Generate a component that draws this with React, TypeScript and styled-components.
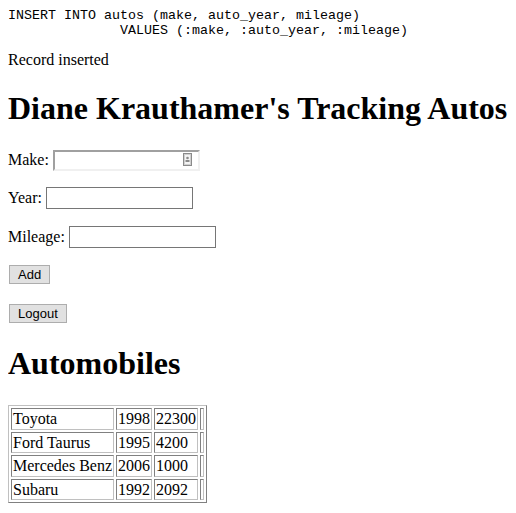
import React from "react";
import styled, { createGlobalStyle } from "styled-components";

const Global = createGlobalStyle`
  html, body { background: #fff; }
  body {
    margin: 8px;
    font-family: "Liberation Serif", "Times New Roman", serif;
    font-size: 16px;
    color: #000;
  }
`;

const Page = styled.div`
  display: flex;
  flex-direction: column;
`;

const Sql = styled.pre`
  margin: 0 0 13px;
  font-family: "Liberation Mono", "Courier New", monospace;
  font-size: 13.33px;
  line-height: 15px;
  white-space: pre;
`;

const Message = styled.div`
  margin: 0;
  line-height: 18px;
`;

const Heading = styled.h1`
  font-size: 32px;
  font-weight: bold;
  margin: 21px 0;
  line-height: 37px;
  white-space: nowrap;
`;

const Form = styled.form`
  display: flex;
  flex-direction: column;
  gap: 16.3px;
  margin-top: 1px;
`;

const Row = styled.div`
  display: flex;
  align-items: center;
  line-height: 18px;
  height: 22px;
`;

const Label = styled.label`
  margin-right: 4px;
`;

const TextInput = styled.input<{ $auto?: boolean }>`
  box-sizing: border-box;
  width: 147px;
  height: ${(p) => (p.$auto ? "21px" : "22px")};
  padding: 1px 2px;
  font-family: "Liberation Sans", Arial, sans-serif;
  font-size: 13.33px;
  background: #fff;
  border: ${(p) => (p.$auto ? "2px solid" : "1px solid")};
  border-color: ${(p) =>
    p.$auto ? "#a0a0a0 #f0f0f0 #f0f0f0 #a0a0a0" : "#767676"};
  outline: none;
`;

const FieldWrap = styled.span`
  position: relative;
  display: inline-flex;
`;

const CardIcon = styled.svg`
  position: absolute;
  right: 8px;
  top: 3px;
`;

const Button = styled.button`
  box-sizing: border-box;
  height: 19px;
  padding: 0 8px;
  margin-left: 1px;
  font-family: "Liberation Sans", Arial, sans-serif;
  font-size: 13px;
  color: #000;
  background: #e1e1e1;
  border: 1px solid #adadad;
  border-radius: 0;
  line-height: 15px;
`;

const ButtonRow = styled.div`
  display: flex;
  align-items: center;
  height: 22px;
`;

const Table = styled.table`
  border-collapse: separate;
  border-spacing: 2px;
  border: 1px solid;
  border-color: #c0c0c0 #808080 #808080 #c0c0c0;
  align-self: flex-start;
  margin-top: 2px;
`;

const Cell = styled.td`
  border: 1px solid;
  border-color: #808080 #c0c0c0 #c0c0c0 #808080;
  padding: 1px;
  line-height: 17.5px;
`;

const rows = [
  ["Toyota", "1998", "22300"],
  ["Ford Taurus", "1995", "4200"],
  ["Mercedes Benz", "2006", "1000"],
  ["Subaru", "1992", "2092"],
];

export default function App() {
  return (
    <Page>
      <Global />
      <Sql>{`INSERT INTO autos (make, auto_year, mileage)
              VALUES (:make, :auto_year, :mileage)`}</Sql>
      <Message>Record inserted</Message>
      <Heading>Diane Krauthamer's Tracking Autos</Heading>
      <Form>
        <Row>
          <Label>Make:</Label>
          <FieldWrap>
            <TextInput $auto type="text" />
            <CardIcon width="9" height="13" viewBox="0 0 9 13">
              <rect x="0.5" y="0.5" width="8" height="12" fill="#f4f4f4" stroke="#8a8a8a" />
              <rect x="1.5" y="1.5" width="6" height="10" fill="none" stroke="#d0d0d0" />
              <circle cx="4.5" cy="5" r="1.3" fill="#8a8a8a" />
              <rect x="2.5" y="7" width="4" height="2" fill="#8a8a8a" />
            </CardIcon>
          </FieldWrap>
        </Row>
        <Row>
          <Label>Year:</Label>
          <TextInput type="text" />
        </Row>
        <Row>
          <Label>Mileage:</Label>
          <TextInput type="text" />
        </Row>
        <ButtonRow>
          <Button type="button">Add</Button>
        </ButtonRow>
        <ButtonRow>
          <Button type="button">Logout</Button>
        </ButtonRow>
      </Form>
      <Heading>Automobiles</Heading>
      <Table>
        <tbody>
          {rows.map((r) => (
            <tr key={r[0]}>
              <Cell>{r[0]}</Cell>
              <Cell>{r[1]}</Cell>
              <Cell>{r[2]}</Cell>
              <Cell />
            </tr>
          ))}
        </tbody>
      </Table>
    </Page>
  );
}
